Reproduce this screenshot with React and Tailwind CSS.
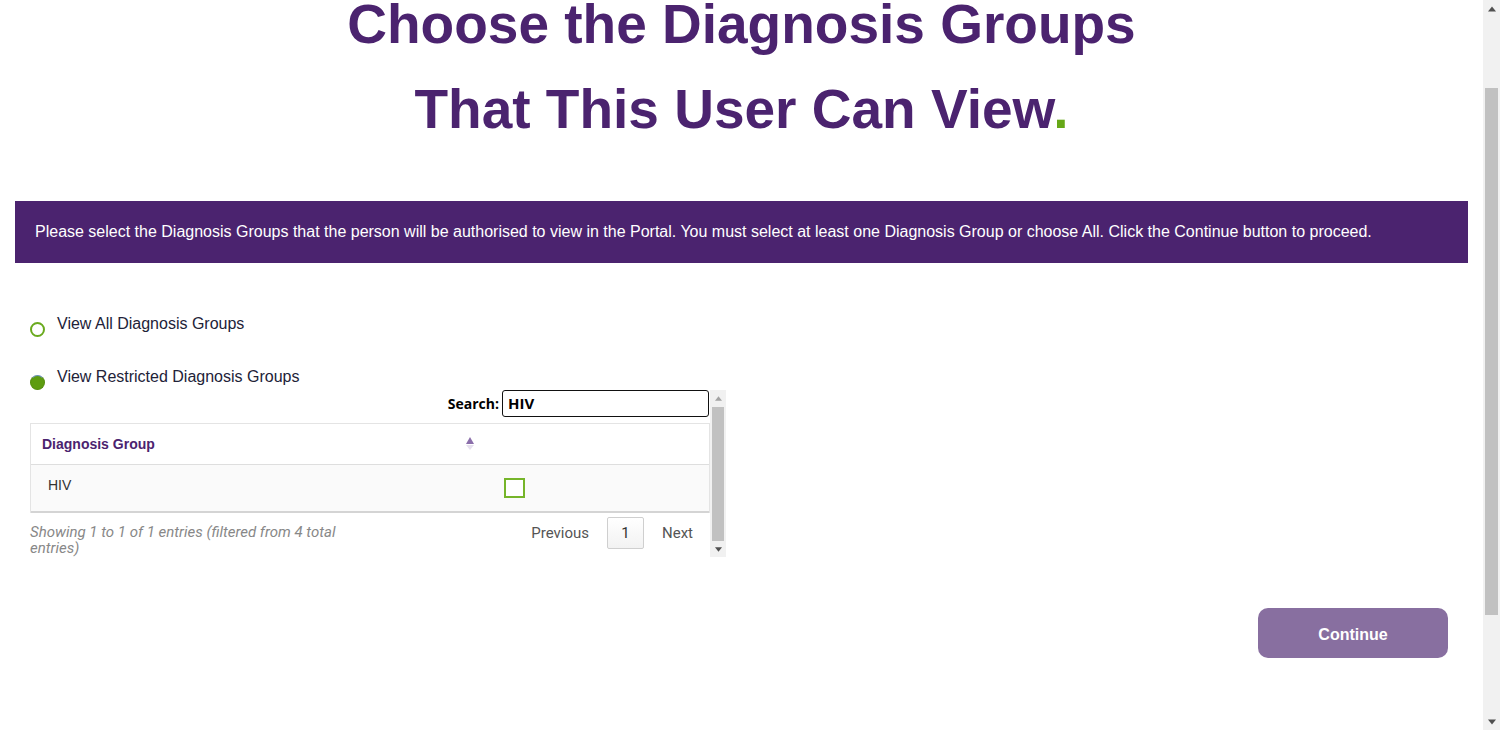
import React from 'react';

const arial = { fontFamily: '"Liberation Sans", Arial, sans-serif' };

function SortIcon() {
  return (
    <svg width="8" height="14" viewBox="0 0 8 14" aria-hidden="true">
      <path d="M4 0 L8 7 L0 7 Z" fill="#8b6fab" />
      <path d="M0 8 L8 8 L4 13 Z" fill="#e6e0ee" />
    </svg>
  );
}

function Arrow({ dir, color, size = 7 }) {
  return (
    <svg width={size} height={size - 2} viewBox="0 0 8 5" aria-hidden="true">
      {dir === 'up' ? <path d="M4 0 L8 5 L0 5 Z" fill={color} /> : <path d="M0 0 L8 0 L4 5 Z" fill={color} />}
    </svg>
  );
}

function DataTable() {
  return (
    <div className="mt-[3px] ml-[30px] flex h-[167px] w-[696px]">
      <div className="w-[680px]">
        {/* search */}
        <div className="flex h-[27px] items-center justify-end pr-[1px] font-['Open_Sans',sans-serif]">
          <span className="text-[14px] font-bold text-black">Search:</span>
          <div className="ml-[3px] flex h-[27px] w-[207px] items-center rounded-[3px] border-[1.5px] border-[#111] px-[5px] text-[15px] font-bold text-black">
            HIV
          </div>
        </div>

        {/* table */}
        <div className="mt-[6px] border-x border-t border-[#e4e4e4]" style={arial}>
          <div className="flex h-[41px] border-b border-[#dedede] bg-white">
            <div className="flex w-[455px] items-center justify-between pl-[11px] pr-[12px]">
              <span className="text-[14px] font-bold text-[#4b236f]">Diagnosis Group</span>
              <SortIcon />
            </div>
            <div className="flex-1" />
          </div>
          <div className="flex h-[48px] border-b-2 border-[#d4d4d4] bg-[#fafafa]">
            <div className="w-[455px] pl-[17px] pt-[10px] text-[14px] text-[#333]">HIV</div>
            <div className="pl-[18px] pt-[13px]">
              <div className="h-[20px] w-[21px] border-2 border-[#76b52a] bg-white" />
            </div>
          </div>
        </div>

        {/* info + paging */}
        <div className="flex items-start justify-between font-['Roboto',sans-serif]">
          <div className="w-[350px] pt-[11px] text-[15px] italic leading-[16px] text-[#888]">
            Showing 1 to 1 of 1 entries (filtered from 4 total entries)
          </div>
          <div className="mt-[4px] flex items-center pr-[17px] text-[15px] text-[#555]">
            <span>Previous</span>
            <span className="ml-[18px] flex h-[32px] w-[37px] items-center justify-center rounded-[2px] border border-[#cfcfcf] bg-gradient-to-b from-white to-[#f2f2f2] text-[#333]">
              1
            </span>
            <span className="ml-[18px]">Next</span>
          </div>
        </div>
      </div>

      {/* inner scrollbar */}
      <div className="flex w-[16px] flex-col items-center bg-[#f1f1f1]">
        <div className="flex h-[17px] items-center justify-center">
          <Arrow dir="up" color="#a3a3a3" />
        </div>
        <div className="h-[134px] w-[12px] bg-[#c1c1c1]" />
        <div className="flex flex-1 items-center justify-center">
          <Arrow dir="down" color="#505050" />
        </div>
      </div>
    </div>
  );
}

export default function App() {
  return (
    <div className="flex h-[730px] w-[1500px] overflow-hidden bg-white">
      <main className="w-[1483px]" style={arial}>
        <h1 className="-mt-[18px] text-center text-[55px] font-bold leading-[85px] text-[#4b236f]">
          Choose the Diagnosis Groups
          <br />
          That This User Can View<span className="text-[#66a817]">.</span>
        </h1>

        <div className="mx-[15px] mt-[49px] flex h-[62px] items-center bg-[#4b236f] px-[20px] text-[16px] text-white">
          Please select the Diagnosis Groups that the person will be authorised to view in the Portal. You must select at least one Diagnosis Group or choose All. Click the Continue button to proceed.
        </div>

        <div className="mt-[51px] flex h-[20px] items-start pl-[30px] text-[16px] leading-[20px] text-[#222238]">
          <span className="mt-[8px] h-[15px] w-[15px] shrink-0 rounded-full border-2 border-[#6aaa1e] bg-white" />
          <span className="ml-[12px]">View All Diagnosis Groups</span>
        </div>
        <div className="mt-[33px] flex h-[20px] items-start pl-[30px] text-[16px] leading-[20px] text-[#222238]">
          <span className="mt-[8px] h-[15px] w-[15px] shrink-0 rounded-full border border-[#568f12] border-t-[#6b8fb8] bg-[#5d9c10]" />
          <span className="ml-[12px]">View Restricted Diagnosis Groups</span>
        </div>

        <DataTable />

        <div className="mt-[51px] flex justify-end pr-[35px]">
          <button
            type="button"
            className="h-[50px] w-[190px] rounded-[10px] bg-[#886fa0] pt-[3px] text-[16px] font-bold text-white"
          >
            Continue
          </button>
        </div>
      </main>

      {/* page scrollbar */}
      <div className="flex w-[17px] flex-col items-center bg-[#f1f1f1]">
        <div className="flex h-[17px] items-center justify-center">
          <Arrow dir="up" color="#505050" size={8} />
        </div>
        <div className="mt-[71px] h-[527px] w-[13px] bg-[#c1c1c1]" />
        <div className="flex-1" />
        <div className="flex h-[17px] items-center justify-center">
          <Arrow dir="down" color="#505050" size={8} />
        </div>
      </div>
    </div>
  );
}
